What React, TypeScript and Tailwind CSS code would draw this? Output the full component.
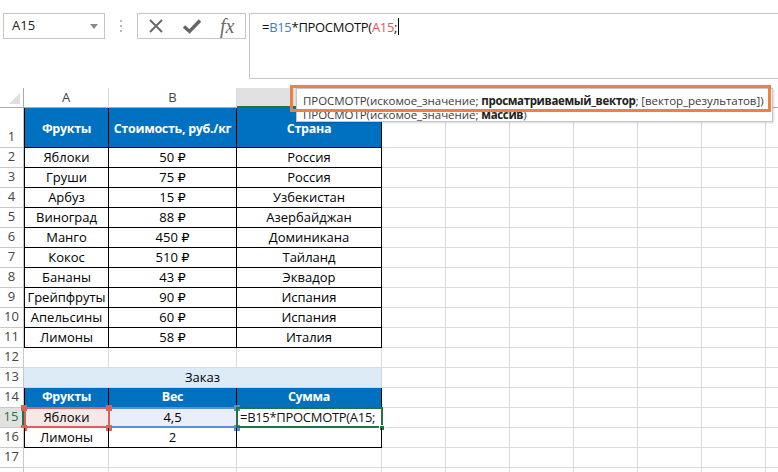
import React from "react";

const FONT = { fontFamily: '"Open Sans", "DejaVu Sans", sans-serif' };

const COLW = [85, 128, 145, 64, 64, 64, 64, 64, 64, 64];
const LETTERS = ["A", "B", "C", "", "", "", "", "", "", ""];

const DATA: [string, string, string][] = [
  ["Яблоки", "50 ₽", "Россия"],
  ["Груши", "75 ₽", "Россия"],
  ["Арбуз", "15 ₽", "Узбекистан"],
  ["Виноград", "88 ₽", "Азербайджан"],
  ["Манго", "450 ₽", "Доминикана"],
  ["Кокос", "510 ₽", "Тайланд"],
  ["Бананы", "43 ₽", "Эквадор"],
  ["Грейпфруты", "90 ₽", "Испания"],
  ["Апельсины", "60 ₽", "Испания"],
  ["Лимоны", "58 ₽", "Италия"],
];

type CellDef = { w: number; cls: string; content?: React.ReactNode };

function RowHeader({ n, h, selected }: { n?: number; h: number; selected?: boolean }) {
  return (
    <div
      className={
        "shrink-0 w-[24px] flex items-end justify-center pb-[1px] text-[13px] border-b " +
        (selected
          ? "bg-[#e1e1e1] text-[#217346] border-b-[#c8c8c8] border-r-2 border-r-[#217346]"
          : "bg-white text-[#444444] border-r border-[#c8c8c8]")
      }
      style={{ height: h }}
    >
      {n}
    </div>
  );
}

function Cell({ c, h }: { c: CellDef; h: number }) {
  return (
    <div
      className={"shrink-0 box-border flex items-center overflow-visible whitespace-nowrap " + c.cls}
      style={{ width: c.w, height: h }}
    >
      {c.content}
    </div>
  );
}

const GRAY = "border-r border-b border-[#dadada]";
const BLACK = "border-r border-b border-black";
const BLUEHEAD = " bg-[#0070c0] text-white font-bold text-[12.5px] tracking-[-0.3px]";

function grayTail(from: number): CellDef[] {
  return COLW.slice(from).map((w) => ({ w, cls: GRAY }));
}

function Row({
  n,
  h = 20,
  cells,
  selected,
  overlay,
}: {
  n?: number;
  h?: number;
  cells: CellDef[];
  selected?: boolean;
  overlay?: React.ReactNode;
}) {
  return (
    <div className="flex relative">
      <RowHeader n={n} h={h} selected={selected} />
      {cells.map((c, i) => (
        <Cell key={i} c={c} h={h} />
      ))}
      {overlay}
    </div>
  );
}

function center(t: React.ReactNode) {
  return <span className="w-full text-center">{t}</span>;
}

export default function App() {
  const rows: React.ReactNode[] = [];

  rows.push(
    <Row
      key={1}
      n={1}
      h={40}
      cells={[
        { w: 85, cls: BLACK + " border-l pt-[4px]" + BLUEHEAD, content: center("Фрукты") },
        { w: 128, cls: BLACK + " pt-[4px]" + BLUEHEAD, content: center("Стоимость, руб./кг") },
        { w: 145, cls: BLACK + " pt-[4px]" + BLUEHEAD, content: center("Страна") },
        ...grayTail(3),
      ]}
    />
  );

  DATA.forEach((d, i) => {
    rows.push(
      <Row
        key={i + 2}
        n={i + 2}
        cells={[
          { w: 85, cls: BLACK + " border-l", content: center(d[0]) },
          { w: 128, cls: BLACK, content: center(d[1]) },
          { w: 145, cls: BLACK, content: center(d[2]) },
          ...grayTail(3),
        ]}
      />
    );
  });

  rows.push(<Row key={12} n={12} cells={grayTail(0)} />);

  rows.push(
    <Row
      key={13}
      n={13}
      cells={[
        { w: 358, cls: "border-r border-b border-[#c9d6e6] bg-[#ddebf7]", content: center("Заказ") },
        ...grayTail(3),
      ]}
    />
  );

  rows.push(
    <Row
      key={14}
      n={14}
      cells={[
        { w: 85, cls: BLACK + " border-l" + BLUEHEAD, content: center("Фрукты") },
        { w: 128, cls: BLACK + BLUEHEAD, content: center("Вес") },
        { w: 145, cls: BLACK + BLUEHEAD, content: center("Сумма") },
        ...grayTail(3),
      ]}
    />
  );

  rows.push(
    <Row
      key={15}
      n={15}
      selected
      cells={[
        { w: 85, cls: BLACK + " border-l bg-[#f7e8e8]", content: center("Яблоки") },
        { w: 128, cls: BLACK + " bg-[#e9eef8]", content: center("4,5") },
        {
          w: 145,
          cls: BLACK,
          content: <span className="pl-[3px] text-[#111] tracking-[-0.3px]">=B15*ПРОСМОТР(A15;</span>,
        },
        ...grayTail(3),
      ]}
      overlay={
        <>
          <div className="absolute left-[108px] top-[-1px] w-[130px] h-[21px] border-2 border-[#5b8fd3]" />
          <div className="absolute left-[234px] top-[-3px] w-[6px] h-[6px] bg-[#5b8fd3]" />
          <div className="absolute left-[234px] top-[17px] w-[6px] h-[6px] bg-[#5b8fd3]" />
          <div className="absolute left-[24px] top-[-1px] w-[86px] h-[21px] border-2 border-[#d9625e]" />
          <div className="absolute left-[21px] top-[-3px] w-[6px] h-[6px] bg-[#d9625e]" />
          <div className="absolute left-[106px] top-[-3px] w-[6px] h-[6px] bg-[#d9625e]" />
          <div className="absolute left-[21px] top-[17px] w-[6px] h-[6px] bg-[#d9625e]" />
          <div className="absolute left-[106px] top-[17px] w-[6px] h-[6px] bg-[#d9625e]" />
          <div className="absolute left-[236px] top-[-1px] w-[147px] h-[21px] border-2 border-[#217346]" />
          <div className="absolute left-[379px] top-[17px] w-[6px] h-[6px] bg-[#217346] border border-white" />
        </>
      }
    />
  );

  rows.push(
    <Row
      key={16}
      n={16}
      cells={[
        { w: 85, cls: BLACK + " border-l", content: center("Лимоны") },
        { w: 128, cls: BLACK, content: center("2") },
        { w: 145, cls: BLACK },
        ...grayTail(3),
      ]}
    />
  );
  rows.push(<Row key={17} n={17} cells={grayTail(0)} />);
  rows.push(<Row key={18} cells={grayTail(0)} />);

  return (
    <div className="w-[778px] h-[472px] overflow-hidden bg-white relative text-[13px] text-black" style={FONT}>
      {/* Formula bar area */}
      <div className="h-[88px] flex items-start pt-[13px]">
        <div className="ml-[3px] w-[102px] h-[26px] border border-[#c6c6c6] flex items-center justify-between pl-[8px] pr-[6px] text-[13px] text-[#222]">
          <span>A15</span>
          <svg width="8" height="5" viewBox="0 0 8 5">
            <path d="M0 0 L8 0 L4 5 Z" fill="#8a8a8a" />
          </svg>
        </div>
        <div className="w-[32px] h-[26px] flex flex-col items-center justify-center gap-[3px]">
          <div className="w-[2px] h-[2px] bg-[#b8b8b8]" />
          <div className="w-[2px] h-[2px] bg-[#b8b8b8]" />
          <div className="w-[2px] h-[2px] bg-[#b8b8b8]" />
        </div>
        <div className="w-[109px] h-[26px] border border-[#c6c6c6] flex items-center">
          <div className="w-[36px] flex justify-center">
            <svg width="16" height="16" viewBox="0 0 16 16">
              <path d="M2 2 L14 14 M14 2 L2 14" stroke="#6b6b6b" strokeWidth="2" fill="none" />
            </svg>
          </div>
          <div className="w-[36px] flex justify-center">
            <svg width="20" height="16" viewBox="0 0 20 16">
              <path d="M2 8.5 L7.5 13.5 L18 2.5" stroke="#666666" strokeWidth="3.4" fill="none" />
            </svg>
          </div>
          <div className="w-[36px] flex justify-center">
            <span
              className="italic text-[20px] leading-none text-[#6b6b6b]"
              style={{ fontFamily: '"Liberation Serif", "DejaVu Serif", serif' }}
            >
              fx
            </span>
          </div>
        </div>
        <div className="ml-[3px] flex-1 h-[66px] border border-r-0 border-[#c6c6c6] pl-[12px] pt-[4px] text-[13px] leading-[18px] text-[#111] tracking-[-0.3px] flex items-start">
          <span>=</span>
          <span className="text-[#4a7ebb]">B15</span>
          <span>*ПРОСМОТР(</span>
          <span className="text-[#e0585c]">A15</span>
          <span>;</span>
          <span className="inline-block w-[1px] h-[17px] bg-black ml-[1px]" />
        </div>
      </div>

      {/* Sheet */}
      <div className="flex flex-col">
        <div className="flex h-[20px]">
          <div className="shrink-0 w-[24px] h-[20px] border-r border-b border-[#ababab] bg-white flex items-end justify-end p-[3px]">
            <svg width="11" height="11" viewBox="0 0 11 11">
              <path d="M11 0 L11 11 L0 11 Z" fill="#dfdfdf" />
            </svg>
          </div>
          {COLW.map((w, i) => (
            <div
              key={i}
              className={
                "shrink-0 h-[20px] flex items-center justify-center text-[13px] " +
                (i === 2
                  ? "bg-[#e1e1e1] text-[#217346] border-r border-r-[#c8c8c8] border-b-2 border-b-[#217346]"
                  : "bg-white text-[#444444] border-r border-b border-r-[#dadada] border-b-[#ababab]")
              }
              style={{ width: w }}
            >
              {LETTERS[i]}
            </div>
          ))}
        </div>
        {rows}
      </div>

      {/* Function tooltip */}
      <div className="absolute left-[296px] top-[88px] w-[477px] h-[34px] bg-white border border-[#c6c6c6] shadow-[1px_1px_2px_rgba(0,0,0,0.15)] pl-[6px] pt-[5px] text-[11.5px] leading-[14px] tracking-[-0.05px] text-[#3c3c3c] whitespace-nowrap">
        <div>
          ПРОСМОТР(искомое_значение; <b className="text-[#222] tracking-[-0.35px]">просматриваемый_вектор</b>; [вектор_результатов])
        </div>
        <div>
          ПРОСМОТР(искомое_значение; <b className="text-[#222] tracking-[-0.35px]">массив</b>)
        </div>
      </div>
      <div className="absolute left-[290px] top-[85px] w-[481px] h-[27px] border-[3px] border-[#ee8141]" />
    </div>
  );
}
